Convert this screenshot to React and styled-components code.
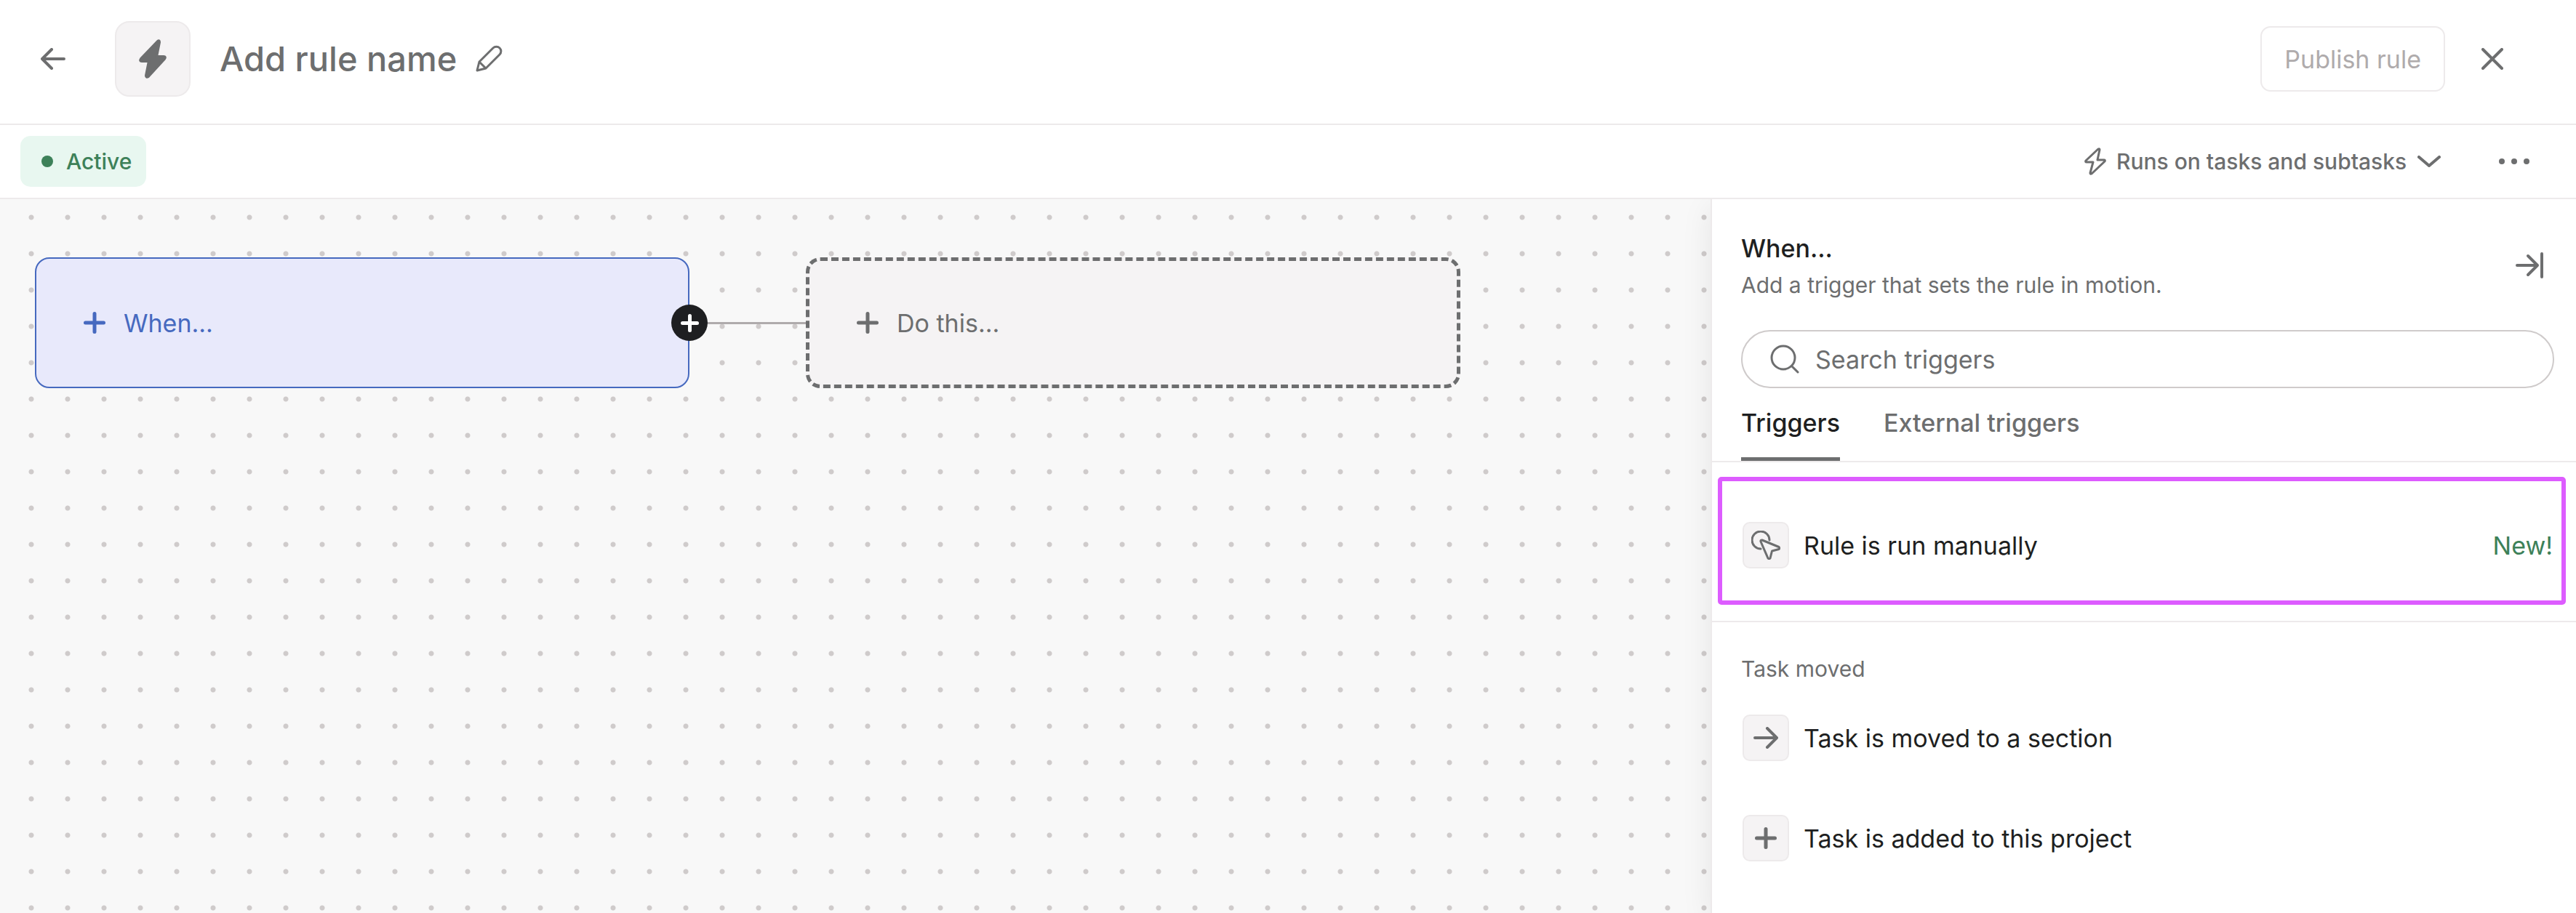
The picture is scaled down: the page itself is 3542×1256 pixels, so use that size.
import React from 'react'
import styled, { createGlobalStyle } from 'styled-components'

const GlobalStyle = createGlobalStyle`
  * {
    box-sizing: border-box;
  }

  body {
    margin: 0;
    background: #ffffff;
    color: #1e1f21;
    font-family: Inter, 'Liberation Sans', sans-serif;
    font-size: 34px;
  }

  h1, h2, h3, p {
    margin: 0;
  }

  button, input, select {
    font: inherit;
    color: inherit;
  }
`

const Page = styled.div`
  display: flex;
  flex-direction: column;
  min-height: 100vh;
`

const Header = styled.header`
  display: flex;
  align-items: center;
  justify-content: space-between;
  padding: 29px 90px 37px 48px;
  border-bottom: 2px solid #edeaeb;
`

const Group = styled.div`
  display: flex;
  align-items: center;
  gap: ${props => props.$gap}px;
`

const IconButton = styled.button`
  display: flex;
  align-items: center;
  justify-content: center;
  width: 50px;
  height: 50px;
  padding: 0;
  border: 0;
  background: none;
  color: #6d6e6f;
  cursor: pointer;
`

const RuleBadge = styled.div`
  display: flex;
  align-items: center;
  justify-content: center;
  width: 104px;
  height: 104px;
  margin: 0 40px 0 60px;
  border: 2px solid #edeaeb;
  border-radius: 20px;
  background: #f5f3f4;
  color: #6d6e6f;
`

const RuleName = styled.h1`
  margin-right: 20px;
  font-size: 47px;
  font-weight: 500;
  line-height: 60px;
  color: #6d6e6f;
`

const PublishButton = styled.button`
  height: 90px;
  padding: 0 31px;
  border: 2px solid #edeaeb;
  border-radius: 14px;
  background: #ffffff;
  color: #afabac;
`

const Toolbar = styled.div`
  display: flex;
  align-items: center;
  justify-content: space-between;
  height: 102px;
  padding: 0 60px 0 28px;
  border-bottom: 2px solid #edeaeb;
`

const Status = styled.span`
  display: flex;
  align-items: center;
  gap: 18px;
  height: 70px;
  padding: 0 20px 0 29px;
  border-radius: 14px;
  background: #e8f7f0;
  color: #3d8159;
  font-size: 30px;
  font-weight: 500;

  &::before {
    content: '';
    width: 16px;
    height: 16px;
    border-radius: 50%;
    background: #3d8159;
  }
`

const ScopeLabel = styled.label`
  display: flex;
  align-items: center;
  gap: 14px;
  color: #6d6e6f;
  font-size: 30px;
  font-weight: 500;
`

const ScopeSelect = styled.select`
  appearance: none;
  padding: 0;
  border: 0;
  background: none;
  cursor: pointer;
`

const Main = styled.main`
  display: flex;
  flex: 1;
`

const Canvas = styled.section`
  flex: 1;
  display: flex;
  align-items: flex-start;
  padding: 80px 48px;
  background-color: #f8f8f8;
  background-image: radial-gradient(circle, #cfcbcb 3px, transparent 4px);
  background-size: 50px 50px;
  background-position: 18px 0;
`

const StepCard = styled.button`
  display: flex;
  align-items: center;
  gap: 25px;
  width: 900px;
  height: 180px;
  padding: 0 65px;
  border: ${props => (props.$active ? '2px solid #4669bf' : '5px dashed #6d6e6f')};
  border-radius: 20px;
  background: ${props => (props.$active ? '#e8e9fb' : '#f5f3f4')};
  color: ${props => (props.$active ? '#4669bf' : '#6d6e6f')};
  cursor: pointer;
`

const Connector = styled.div`
  position: relative;
  align-self: flex-start;
  width: 160px;
  height: 3px;
  margin-top: 89px;
  background: #afabac;
`

const AddStep = styled.button`
  position: absolute;
  top: -24px;
  left: -25px;
  display: flex;
  align-items: center;
  justify-content: center;
  width: 50px;
  height: 50px;
  padding: 0;
  border: 0;
  border-radius: 50%;
  background: #1e1f21;
  color: #ffffff;
  cursor: pointer;
`

const Panel = styled.aside`
  width: 1190px;
  border-left: 2px solid #edeaeb;
  background: #ffffff;
  box-shadow: 0 10px 40px rgba(0, 0, 0, 0.08);
  clip-path: inset(0 0 0 -60px);
`

const PanelHead = styled.div`
  display: flex;
  align-items: center;
  justify-content: space-between;
  padding: 46px 39px 44px 40px;
`

const PanelTitle = styled.h2`
  font-size: 34px;
  font-weight: 500;
  line-height: 44px;
`

const PanelText = styled.p`
  margin-top: 10px;
  font-size: 30px;
  line-height: 36px;
  color: #6d6e6f;
`

const SearchBox = styled.label`
  display: flex;
  align-items: center;
  gap: 22px;
  height: 80px;
  margin: 0 30px 26px 40px;
  padding: 0 38px;
  border: 2px solid #cfcbcb;
  border-radius: 40px;
  color: #6d6e6f;
`

const SearchInput = styled.input`
  flex: 1;
  padding: 0;
  border: 0;
  outline: 0;
  background: none;

  &::placeholder {
    color: #6d6e6f;
    opacity: 1;
  }
`

const Tabs = styled.div`
  display: flex;
  gap: 60px;
  padding: 0 40px;
  border-bottom: 2px solid #edeaeb;
`

const Tab = styled.button`
  padding: 0 0 25px;
  border: 0;
  border-bottom: 5px solid ${props => (props.$active ? '#6d6e6f' : 'transparent')};
  background: none;
  color: ${props => (props.$active ? '#1e1f21' : '#6d6e6f')};
  font-weight: 500;
  line-height: 44px;
  cursor: pointer;
`

const Featured = styled.div`
  padding: 20px 14px 22px 8px;
  border-bottom: 2px solid #edeaeb;
`

const TriggerRow = styled.button`
  display: flex;
  align-items: center;
  gap: 20px;
  width: 100%;
  height: ${props => (props.$featured ? 176 : 138)}px;
  padding: ${props => (props.$featured ? '12px 12px 0 28px' : '0 42px')};
  border: ${props => (props.$featured ? '6px solid #dd5cff' : '0')};
  border-radius: 5px;
  background: none;
  text-align: left;
  cursor: pointer;
`

const Tile = styled.span`
  display: flex;
  align-items: center;
  justify-content: center;
  width: 64px;
  height: 64px;
  border: 2px solid #edeaeb;
  border-radius: 10px;
  background: #f5f3f4;
  color: #6d6e6f;
`

const NewTag = styled.span`
  margin-left: auto;
  color: #3d8159;
`

const GroupTitle = styled.h3`
  padding: 44px 40px 6px;
  font-size: 30px;
  font-weight: 400;
  line-height: 40px;
  color: #6d6e6f;
`

function Icon({ width, height, stroke = 4, children }) {
  return (
    <svg
      width={width}
      height={height}
      viewBox={`0 0 ${width} ${height}`}
      fill="none"
      stroke="currentColor"
      strokeWidth={stroke}
      strokeLinecap="round"
      strokeLinejoin="round"
      aria-hidden="true"
    >
      {children}
    </svg>
  )
}

function PlusIcon({ size = 30, stroke = 5 }) {
  const mid = size / 2
  const end = size - stroke / 2
  return (
    <Icon width={size} height={size} stroke={stroke}>
      <path d={`M${mid} ${stroke / 2}V${end}M${stroke / 2} ${mid}H${end}`} />
    </Icon>
  )
}

const BackIcon = () => (
  <Icon width={34} height={30}>
    <path d="M32 15H3M15 2L2 15l13 13" />
  </Icon>
)

const ForwardIcon = () => (
  <Icon width={34} height={30}>
    <path d="M2 15h29M19 2l13 13-13 13" />
  </Icon>
)

const CloseIcon = () => (
  <Icon width={30} height={30}>
    <path d="M2 2l26 26M28 2L2 28" />
  </Icon>
)

const BoltSolidIcon = () => (
  <Icon width={38} height={54} stroke={4}>
    <path fill="currentColor" d="M26 3L3 27q-2 3 1 3h10l-4 20q0 3 3 1l22-24q2-3-1-3H24l4-20q0-3-2-1z" />
  </Icon>
)

const BoltIcon = () => (
  <Icon width={30} height={38} stroke={3}>
    <path d="M19 2L2 18q-1 2 1 2h9L8 35q0 2 2 1l18-17q1-2-1-2h-9l3-14q0-2-2-1z" />
  </Icon>
)

const PencilIcon = () => (
  <Icon width={38} height={38} stroke={3}>
    <path d="M2 35l3-12L24 4a6.3 6.3 0 0 1 9 9L14 32zM5 23l9 9" />
  </Icon>
)

const ChevronIcon = () => (
  <Icon width={32} height={16}>
    <path d="M2 2l14 12L30 2" />
  </Icon>
)

const MoreIcon = () => (
  <Icon width={42} height={8} stroke={0}>
    <g fill="currentColor">
      <circle cx="4" cy="4" r="4" />
      <circle cx="21" cy="4" r="4" />
      <circle cx="38" cy="4" r="4" />
    </g>
  </Icon>
)

const CollapseIcon = () => (
  <Icon width={38} height={36}>
    <path d="M2 18h27M17 5l13 13-13 13M36 2v32" />
  </Icon>
)

const SearchIcon = () => (
  <Icon width={40} height={40} stroke={3}>
    <circle cx="18" cy="18" r="16" />
    <path d="M30 30l8 8" />
  </Icon>
)

const ClickIcon = () => (
  <Icon width={40} height={40} stroke={3}>
    <path d="M13 25A12 12 0 1 1 25 13" />
    <path d="M13 15l10 23q1.5 1.5 3 0l2.5-10 9.5-2.5q1.500-1.500 0-3L15 13q-2.500-.5-2 2z" />
  </Icon>
)

const movedTriggers = [
  { label: 'Task is moved to a section', icon: <ForwardIcon /> },
  { label: 'Task is added to this project', icon: <PlusIcon /> },
]

function RuleHeader() {
  return (
    <Header>
      <Group $gap={0}>
        <IconButton aria-label="Back"><BackIcon /></IconButton>
        <RuleBadge><BoltSolidIcon /></RuleBadge>
        <RuleName>Add rule name</RuleName>
        <IconButton aria-label="Edit rule name"><PencilIcon /></IconButton>
      </Group>
      <Group $gap={40}>
        <PublishButton disabled>Publish rule</PublishButton>
        <IconButton aria-label="Close"><CloseIcon /></IconButton>
      </Group>
    </Header>
  )
}

function RuleToolbar() {
  return (
    <Toolbar>
      <Status>Active</Status>
      <Group $gap={76}>
        <ScopeLabel>
          <BoltIcon />
          <ScopeSelect aria-label="Rule scope">
            <option>Runs on tasks and subtasks</option>
          </ScopeSelect>
          <ChevronIcon />
        </ScopeLabel>
        <IconButton aria-label="More actions"><MoreIcon /></IconButton>
      </Group>
    </Toolbar>
  )
}

function TriggerPanel() {
  return (
    <Panel>
      <PanelHead>
        <div>
          <PanelTitle>When...</PanelTitle>
          <PanelText>Add a trigger that sets the rule in motion.</PanelText>
        </div>
        <IconButton aria-label="Collapse panel"><CollapseIcon /></IconButton>
      </PanelHead>
      <SearchBox>
        <SearchIcon />
        <SearchInput type="text" placeholder="Search triggers" aria-label="Search triggers" />
      </SearchBox>
      <Tabs role="tablist">
        <Tab role="tab" aria-selected="true" $active>Triggers</Tab>
        <Tab role="tab" aria-selected="false">External triggers</Tab>
      </Tabs>
      <Featured>
        <TriggerRow $featured>
          <Tile><ClickIcon /></Tile>
          Rule is run manually
          <NewTag>New!</NewTag>
        </TriggerRow>
      </Featured>
      <GroupTitle>Task moved</GroupTitle>
      {movedTriggers.map((trigger) => (
        <TriggerRow key={trigger.label}>
          <Tile>{trigger.icon}</Tile>
          {trigger.label}
        </TriggerRow>
      ))}
    </Panel>
  )
}

function App() {
  return (
    <Page>
      <GlobalStyle />
      <RuleHeader />
      <RuleToolbar />
      <Main>
        <Canvas>
          <StepCard $active><PlusIcon />When...</StepCard>
          <Connector>
            <AddStep aria-label="Add step"><PlusIcon size={25} /></AddStep>
          </Connector>
          <StepCard><PlusIcon />Do this...</StepCard>
        </Canvas>
        <TriggerPanel />
      </Main>
    </Page>
  )
}

export default App
